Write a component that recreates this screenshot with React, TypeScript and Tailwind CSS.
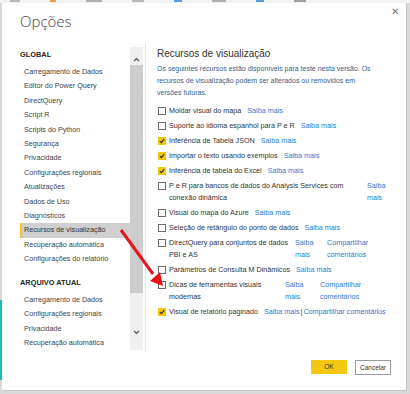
import React from "react";

const F = "font-['Liberation_Sans',Arial,sans-serif]";

function Box({ checked }: { checked?: boolean }) {
  if (checked) {
    return (
      <span className="mt-[2px] mr-[3px] inline-flex h-[8px] w-[8px] shrink-0 items-center justify-center bg-[#f2c811]">
        <svg width="6" height="6" viewBox="0 0 6 6">
          <path d="M0.8 3.1 L2.4 4.6 L5.2 1.2" stroke="#2a2a2a" strokeWidth="1.1" fill="none" />
        </svg>
      </span>
    );
  }
  return <span className="mt-[2px] mr-[3px] inline-block h-[8px] w-[8px] shrink-0 border border-[#6b6b6b] bg-white" />;
}

const L = "text-[#2b7bd0]";

function Row({ checked, label, link = true }: { checked?: boolean; label: string; link?: boolean }) {
  return (
    <div className="flex items-start whitespace-nowrap leading-[12px]">
      <Box checked={checked} />
      <span className="text-[#333]">{label}</span>
      {link && <span className={`ml-[6px] ${L}`}>Saiba mais</span>}
    </div>
  );
}

const nav1 = [
  "Carregamento de Dados",
  "Editor do Power Query",
  "DirectQuery",
  "Script R",
  "Scripts do Python",
  "Segurança",
  "Privacidade",
  "Configurações regionais",
  "Atualizações",
  "Dados de Uso",
  "Diagnósticos",
  "Recursos de visualização",
  "Recuperação automática",
  "Configurações do relatório",
];
const nav2 = ["Carregamento de Dados", "Configurações regionais", "Privacidade", "Recuperação automática"];

export default function App() {
  return (
    <div className={`relative h-[394px] w-[410px] overflow-hidden bg-[#d9d9d9] ${F}`}>
      {/* app strip behind dialog */}
      <div className="flex h-[3px] items-start gap-[30px] bg-[#f2f2f2] pl-[10px]">
        <span className="h-[2px] w-[10px] bg-[#b8b8b8]" />
        <span className="h-[2px] w-[6px] bg-[#e0a050]" />
        <span className="h-[2px] w-[16px] bg-[#b0b0b0]" />
        <span className="h-[2px] w-[12px] bg-[#b8b8b8]" />
        <span className="h-[2px] w-[8px] bg-[#5a9ad8]" />
        <span className="h-[2px] w-[14px] bg-[#b0b0b0]" />
        <span className="h-[2px] w-[8px] bg-[#5a9ad8]" />
        <span className="h-[2px] w-[12px] bg-[#a0a0a0]" />
      </div>
      <div className="absolute left-0 top-[300px] h-[80px] w-[2px] bg-[#1fbcb0]" />

      <div className="relative ml-[2px] flex h-[388px] w-[405px] flex-col border-b border-r border-[#c4c4c4] bg-white">
        {/* close */}
        <div className="absolute right-[7px] top-[3px] text-[10px] leading-[12px] text-[#777]">✕</div>
        {/* header */}
        <div className="h-[40px] pl-[18px] pt-[6px] font-['Open_Sans',sans-serif] text-[15px] font-light leading-[24px] text-[#444]">
          Opções
        </div>

        {/* body */}
        <div className="flex h-[309px]">
          {/* left nav */}
          <div className="flex w-[144px] border-r border-[#e3e3e3]">
            <div className="ml-[18px] w-[110px] whitespace-nowrap pt-[5px] text-[7.2px] text-[#444]">
              <div className="h-[14.4px] text-[7.4px] font-bold leading-[14.4px] text-[#252525]">GLOBAL</div>
              <div className="h-[2.6px]" />
              {nav1.map((n) => (
                <div
                  key={n}
                  className={
                    n === "Recursos de visualização"
                      ? "h-[14.4px] border-l-2 border-[#f2c811] bg-[#cfcfcf] pl-[2px] leading-[14.4px] text-[#333]"
                      : "h-[14.4px] pl-[4px] leading-[14.4px]"
                  }
                >
                  {n}
                </div>
              ))}
              <div className="h-[9.6px]" />
              <div className="h-[14.4px] text-[7.4px] font-bold leading-[14.4px] text-[#252525]">ARQUIVO ATUAL</div>
              <div className="h-[2.6px]" />
              {nav2.map((n) => (
                <div key={n} className="h-[14.4px] pl-[4px] leading-[14.4px]">
                  {n}
                </div>
              ))}
            </div>
            {/* scrollbar */}
            <div className="mt-[4px] flex h-[303px] w-[13px] flex-col items-center bg-[#f0f0f0]">
              <svg width="13" height="18" viewBox="0 0 13 18">
                <path d="M4 14 L6.5 11.5 L9 14" stroke="#555" strokeWidth="1.2" fill="none" />
              </svg>
              <div className="h-[228px] w-[13px] bg-[#cdcdcd]" />
              <div className="flex-1" />
              <svg width="13" height="14" viewBox="0 0 13 14">
                <path d="M4 3 L6.5 5.5 L9 3" stroke="#555" strokeWidth="1.2" fill="none" />
              </svg>
              <div className="h-[8px]" />
            </div>
          </div>

          {/* right content */}
          <div className="flex-1 pl-[11px] pt-[3px] text-[7.2px]">
            <div className="text-[10px] leading-[16px] text-[#333]">Recursos de visualização</div>
            <div className="mt-[1px] whitespace-nowrap text-[7px] leading-[12px] text-[#3a5e88]">
              Os seguintes recursos estão disponíveis para teste nesta versão. Os
              <br />
              recursos de visualização podem ser alterados ou removidos em
              <br />
              versões futuras.
            </div>
            <div className="mt-[6px] flex flex-col gap-[3px] pl-[1px]">
              <Row label="Moldar visual do mapa" />
              <Row label="Suporte ao idioma espanhol para P e R" />
              <Row checked label="Inferência de Tabela JSON" />
              <Row checked label="Importar o texto usando exemplos" />
              <Row checked label="Inferência de tabela do Excel" />
              <div className="flex items-start whitespace-nowrap leading-[12px]">
                <Box />
                <span className="w-[198px] shrink-0 text-[#333]">
                  P e R para bancos de dados do Analysis Services com
                  <br />
                  conexão dinâmica
                </span>
                <span className={L}>
                  Saiba
                  <br />
                  mais
                </span>
              </div>
              <Row label="Visual do mapa do Azure" />
              <Row label="Seleção de retângulo do ponto de dados" />
              <div className="flex items-start whitespace-nowrap leading-[12px]">
                <Box />
                <span className="w-[126px] shrink-0 text-[#333]">
                  DirectQuery para conjuntos de dados
                  <br />
                  PBI e AS
                </span>
                <span className={`w-[32px] shrink-0 ${L}`}>
                  Saiba
                  <br />
                  mais
                </span>
                <span className={L}>
                  Compartilhar
                  <br />
                  comentários
                </span>
              </div>
              <Row label="Parâmetros de Consulta M Dinâmicos" />
              <div className="flex items-start whitespace-nowrap leading-[12px]">
                <Box />
                <span className="w-[116px] shrink-0 text-[#333]">
                  Dicas de ferramentas visuais
                  <br />
                  modernas
                </span>
                <span className={`w-[35px] shrink-0 ${L}`}>
                  Saiba
                  <br />
                  mais
                </span>
                <span className={L}>
                  Compartilhar
                  <br />
                  comentários
                </span>
              </div>
              <div className="flex items-start whitespace-nowrap leading-[12px]">
                <Box checked />
                <span className="text-[#333]">Visual de relatório paginado</span>
                <span className={`ml-[6px] ${L}`}>Saiba mais</span>
                <span className="mx-[1px] text-[#333]">|</span>
                <span className={L}>Compartilhar comentários</span>
              </div>
            </div>
          </div>
        </div>

        {/* footer */}
        <div className="flex justify-end gap-[8px] pr-[15px] pt-[8px]">
          <div className="flex h-[14px] w-[36px] items-center justify-center bg-[#f2c811] text-[6.5px] text-[#333]">OK</div>
          <div className="flex h-[15px] w-[36px] items-center justify-center border border-[#9a9a9a] bg-white text-[6.5px] text-[#333]">
            Cancelar
          </div>
        </div>
      </div>

      {/* red arrow annotation */}
      <svg className="pointer-events-none absolute left-0 top-0" width="410" height="394">
        <line x1="121" y1="230" x2="153" y2="274" stroke="#e8141b" strokeWidth="3" />
        <polygon points="163,286 150,281 160,272" fill="#e8141b" />
      </svg>
    </div>
  );
}
